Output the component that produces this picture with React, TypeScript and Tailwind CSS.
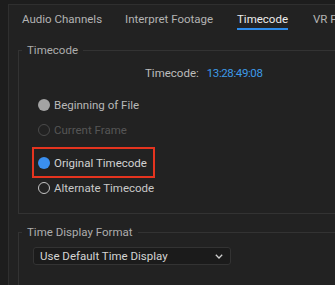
import React from "react";

function Radio({ kind }: { kind: "grayFill" | "blueFill" | "disabled" | "empty" }) {
  if (kind === "grayFill")
    return <span className="block h-[12px] w-[12px] shrink-0 rounded-full bg-[#a3a3a3]" />;
  if (kind === "blueFill")
    return <span className="block h-[12px] w-[12px] shrink-0 rounded-full bg-[#3a8ff0]" />;
  if (kind === "disabled")
    return <span className="block h-[12px] w-[12px] shrink-0 rounded-full border-[1.5px] border-[#4a4a4a]" />;
  return <span className="block h-[12px] w-[12px] shrink-0 rounded-full border-[1.5px] border-[#c4c4c4]" />;
}

function RadioRow({ kind, label, color }: { kind: "grayFill" | "blueFill" | "disabled" | "empty"; label: string; color: string }) {
  return (
    <div className="flex h-[16px] items-center gap-[4px]">
      <Radio kind={kind} />
      <span className={color}>{label}</span>
    </div>
  );
}

export default function App() {
  return (
    <div
      className="h-[285px] w-[335px] overflow-hidden bg-[#1d1d1d] pl-[8px] pt-[4px] text-[11.5px] leading-[16px]"
      style={{ fontFamily: "Roboto, 'Noto Sans', sans-serif" }}
    >
      <div className="h-[400px] w-[400px] border-l border-t border-[#2f2f2f] bg-[#222222]">
        {/* Tabs */}
        <div className="flex h-[25px] pl-[13px]">
          <div className="w-[103px] shrink-0 pt-[6px] text-[#b3b3b3]">Audio Channels</div>
          <div className="w-[112px] shrink-0 pt-[6px] text-[#b3b3b3]">Interpret Footage</div>
          <div className="w-[76px] shrink-0 pt-[6px]">
            <div className="inline-flex flex-col">
              <span className="text-[#ececec]">Timecode</span>
              <span className="mt-[1px] h-[2px] bg-[#2d8ceb]" />
            </div>
          </div>
          <div className="shrink-0 pt-[6px] text-[#b3b3b3] whitespace-nowrap">VR Projection</div>
        </div>

        {/* Timecode fieldset */}
        <fieldset className="ml-[9px] mt-[12px] w-[360px] border border-[#333333] px-0 pb-[17px]">
          <legend className="ml-[3px] px-[5px] text-[#adadad]">Timecode</legend>
          <div className="mt-[7px] flex h-[16px] items-center pl-[126px]">
            <span className="text-[#bdbdbd]">Timecode:</span>
            <span className="ml-[8px] tracking-[-0.4px] text-[#3d9ae8]">13:28:49:08</span>
          </div>
          <div className="pl-[19px]">
            <div className="mt-[16px]">
              <RadioRow kind="grayFill" label="Beginning of File" color="text-[#b8b8b8]" />
            </div>
            <div className="mt-[9px]">
              <RadioRow kind="disabled" label="Current Frame" color="text-[#565656]" />
            </div>
            <div className="-ml-[6px] mt-[9px] h-[31px] w-[123px] border-2 border-[#e5341f] pl-[4px] pt-[6px]">
              <RadioRow kind="blueFill" label="Original Timecode" color="text-[#d2d2d2]" />
            </div>
            <div className="mt-[2px]">
              <RadioRow kind="empty" label="Alternate Timecode" color="text-[#c8c8c8]" />
            </div>
          </div>
        </fieldset>

        {/* Time Display Format fieldset */}
        <fieldset className="ml-[9px] mt-[10px] h-[120px] w-[360px] border border-[#333333] px-0">
          <legend className="ml-[3px] px-[5px] text-[#adadad]">Time Display Format</legend>
          <div className="ml-[14px] mt-[7px] flex h-[18px] w-[198px] items-center justify-between rounded-[3px] border border-[#333333] bg-[#1b1b1b] pl-[6px] pr-[7px]">
            <span className="text-[#d4d4d4]">Use Default Time Display</span>
            <svg width="8" height="5" viewBox="0 0 8 5" fill="none">
              <path d="M0.8 0.8 L4 4 L7.2 0.8" stroke="#cfcfcf" strokeWidth="1.3" />
            </svg>
          </div>
        </fieldset>
      </div>
    </div>
  );
}
